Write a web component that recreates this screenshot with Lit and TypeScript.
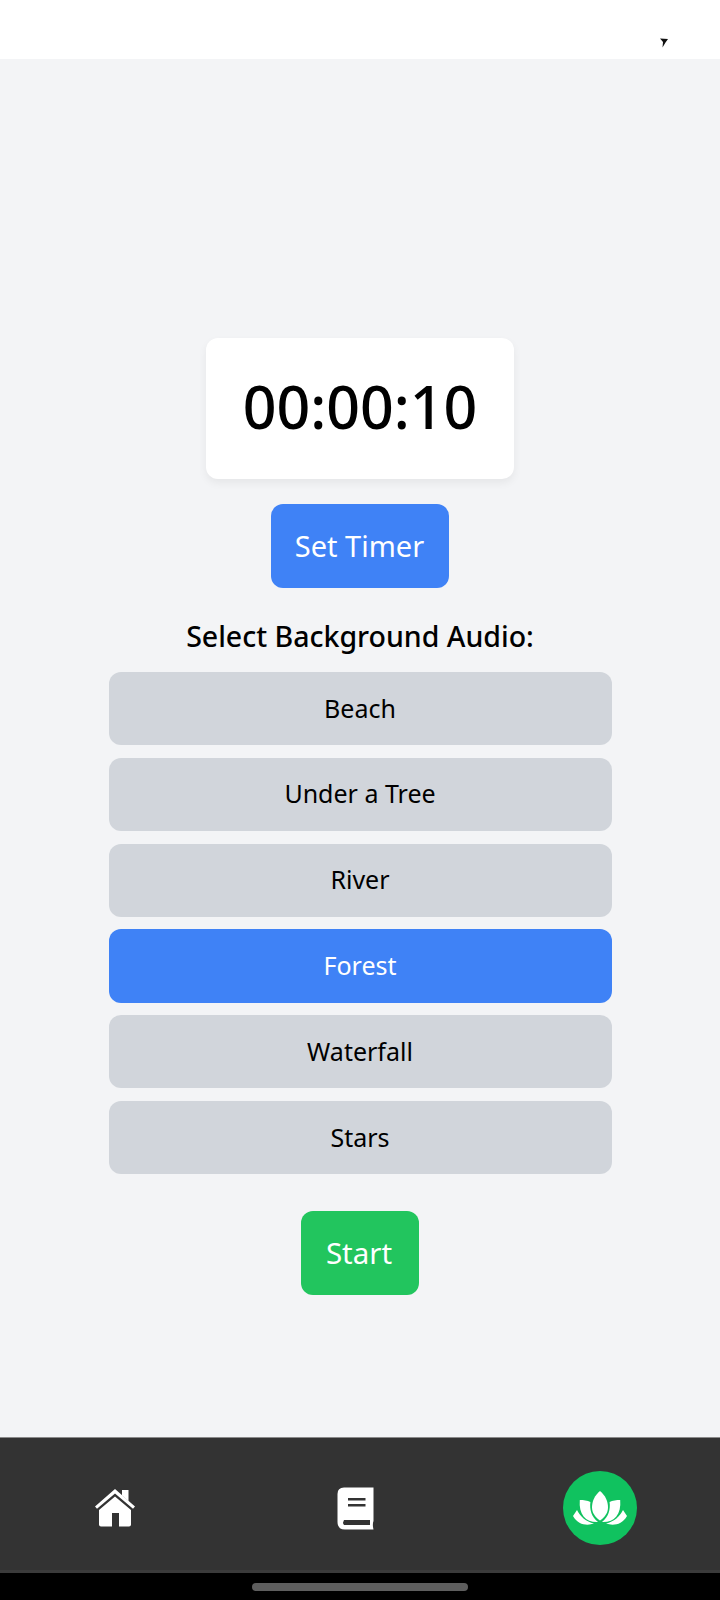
import { LitElement, html, css, svg } from "lit";
import { customElement, state } from "lit/decorators.js";

const AUDIO = ["Beach", "Under a Tree", "River", "Forest", "Waterfall", "Stars"];

const homeIcon = svg`<svg class="home" viewBox="0 0 40 38" width="40" height="38" fill="#fff">
  <path d="M27 1h6.5v11l-6.5-5.5z"/>
  <path d="M20 0 L40 17.4 L38 19.8 L20 4.4 L2 19.8 L0 17.4 Z"/>
  <path fill-rule="evenodd" d="M20 7.4 L36 21 V35.5 Q36 37.5 34 37.5 H24 V24 H17 V37.5 H6 Q4 37.5 4 35.5 V21 Z"/>
</svg>`;

const bookIcon = svg`<svg viewBox="0 0 37 43" width="37" height="43">
  <path fill="#fff" d="M7 0.5 H36.5 V34 Q35.2 37.5 36.5 42.5 H8 Q0.5 42.5 0.5 35 V7 Q0.5 0.5 7 0.5 Z"/>
  <path fill="#333" d="M11 11 H28.5 V13.5 H11 Z M11 17 H28.5 V19.5 H11 Z"/>
  <path fill="#333" d="M7 33 H33 V38 H7 Q5.2 35.5 7 33 Z"/>
</svg>`;

const lotusIcon = svg`<svg viewBox="0 0 54 34" width="54" height="34" fill="#fff">
  <path d="M27 0 C32.5 4.5 35 10.5 35 16.5 C35 21.5 32 26 27 29.5 C22 26 19 21.5 19 16.5 C19 10.5 21.5 4.5 27 0 Z"/>
  <path d="M6.8 9 C10.5 9 14.5 9.6 17.4 11 C16.4 18.5 18.5 26 25 31 C13 31.5 5.5 24 6.8 9 Z"/>
  <path d="M47.2 9 C43.5 9 39.5 9.6 36.6 11 C37.6 18.5 35.5 26 29 31 C41 31.5 48.5 24 47.2 9 Z"/>
  <path d="M4 19 C7.5 26 13 30.5 21 32.6 C14 35 5 34 0 25 Z"/>
  <path d="M50 19 C46.5 26 41 30.5 33 32.6 C40 35 49 34 54 25 Z"/>
</svg>`;

@customElement("app-root")
export class AppRoot extends LitElement {
  @state() private selected = "Forest";

  static styles = css`
    :host {
      display: flex;
      flex-direction: column;
      width: 720px;
      height: 1600px;
      font-family: "Noto Sans", "Open Sans", sans-serif;
      background: #000;
    }
    .status {
      height: 59px;
      background: #fff;
      display: flex;
      justify-content: flex-end;
      align-items: flex-start;
      padding: 38px 52px 0 0;
      box-sizing: border-box;
    }
    .main {
      height: 1378px;
      box-sizing: border-box;
      background: #f3f4f6;
      display: flex;
      flex-direction: column;
      align-items: center;
      padding-top: 279px;
    }
    .timer {
      width: 308px;
      height: 141px;
      box-sizing: border-box;
      padding-bottom: 6px;
      background: #fff;
      border-radius: 12px;
      box-shadow: 0 4px 8px rgba(0, 0, 0, 0.06);
      display: flex;
      align-items: center;
      justify-content: center;
      font-size: 59px;
      font-weight: 500;
      color: #000;
    }
    button {
      font: inherit;
      border: none;
      cursor: pointer;
      padding: 0;
      display: flex;
      align-items: center;
      justify-content: center;
    }
    .set {
      margin-top: 25px;
      width: 178px;
      height: 84px;
      padding: 0 1px 2px 0;
      border-radius: 12px;
      background: #3f82f6;
      color: #fff;
      font-size: 29px;
    }
    h2 {
      margin: 25px 0 0;
      height: 46px;
      line-height: 46px;
      font-size: 28.5px;
      font-weight: 500;
      color: #000;
    }
    .list {
      margin-top: 13px;
      width: 503px;
      display: flex;
      flex-direction: column;
      gap: 12.6px;
    }
    .item {
      height: 73.2px;
      padding-bottom: 2px;
      border-radius: 12px;
      background: #d1d5db;
      color: #000;
      font-size: 25px;
    }
    .item.on {
      background: #3f82f6;
      color: #fff;
    }
    .start {
      margin-top: 37px;
      width: 118px;
      height: 84px;
      padding: 0 2px 2px 0;
      border-radius: 12px;
      background: #22c55e;
      color: #fff;
      font-size: 29.5px;
    }
    nav {
      height: 136px;
      box-sizing: border-box;
      padding-top: 8px;
      background: #333;
      border-top: 1px solid #8a8a8a;
      border-bottom: 3px solid #3b3b3b;
      display: grid;
      grid-template-columns: 230px 250px 240px;
      align-items: center;
      justify-items: center;
    }
    .navbtn {
      background: none;
    }
    .lotus {
      width: 74px;
      height: 74px;
      border-radius: 50%;
      background: #10c25f;
    }
    .gesture {
      flex: 1;
      display: flex;
      justify-content: center;
      padding-top: 10px;
    }
    .pill {
      width: 216px;
      height: 8px;
      border-radius: 4px;
      background: #5e5e5e;
    }
  `;

  render() {
    return html`
      <div class="status">
        <svg viewBox="0 0 8 10" width="8" height="10"><path fill="#111" d="M0 0.5 L8 1 L5.5 4.5 L2.5 9.5 L3 4 Z"/></svg>
      </div>
      <div class="main">
        <div class="timer">00:00:10</div>
        <button class="set">Set Timer</button>
        <h2>Select Background Audio:</h2>
        <div class="list">
          ${AUDIO.map(
            (a) => html`<button class="item ${a === this.selected ? "on" : ""}" @click=${() => (this.selected = a)}>${a}</button>`
          )}
        </div>
        <button class="start">Start</button>
      </div>
      <nav>
        <button class="navbtn" aria-label="Home">${homeIcon}</button>
        <button class="navbtn" aria-label="Journal">${bookIcon}</button>
        <button class="navbtn lotus" aria-label="Meditate">${lotusIcon}</button>
      </nav>
      <div class="gesture"><div class="pill"></div></div>
    `;
  }
}
